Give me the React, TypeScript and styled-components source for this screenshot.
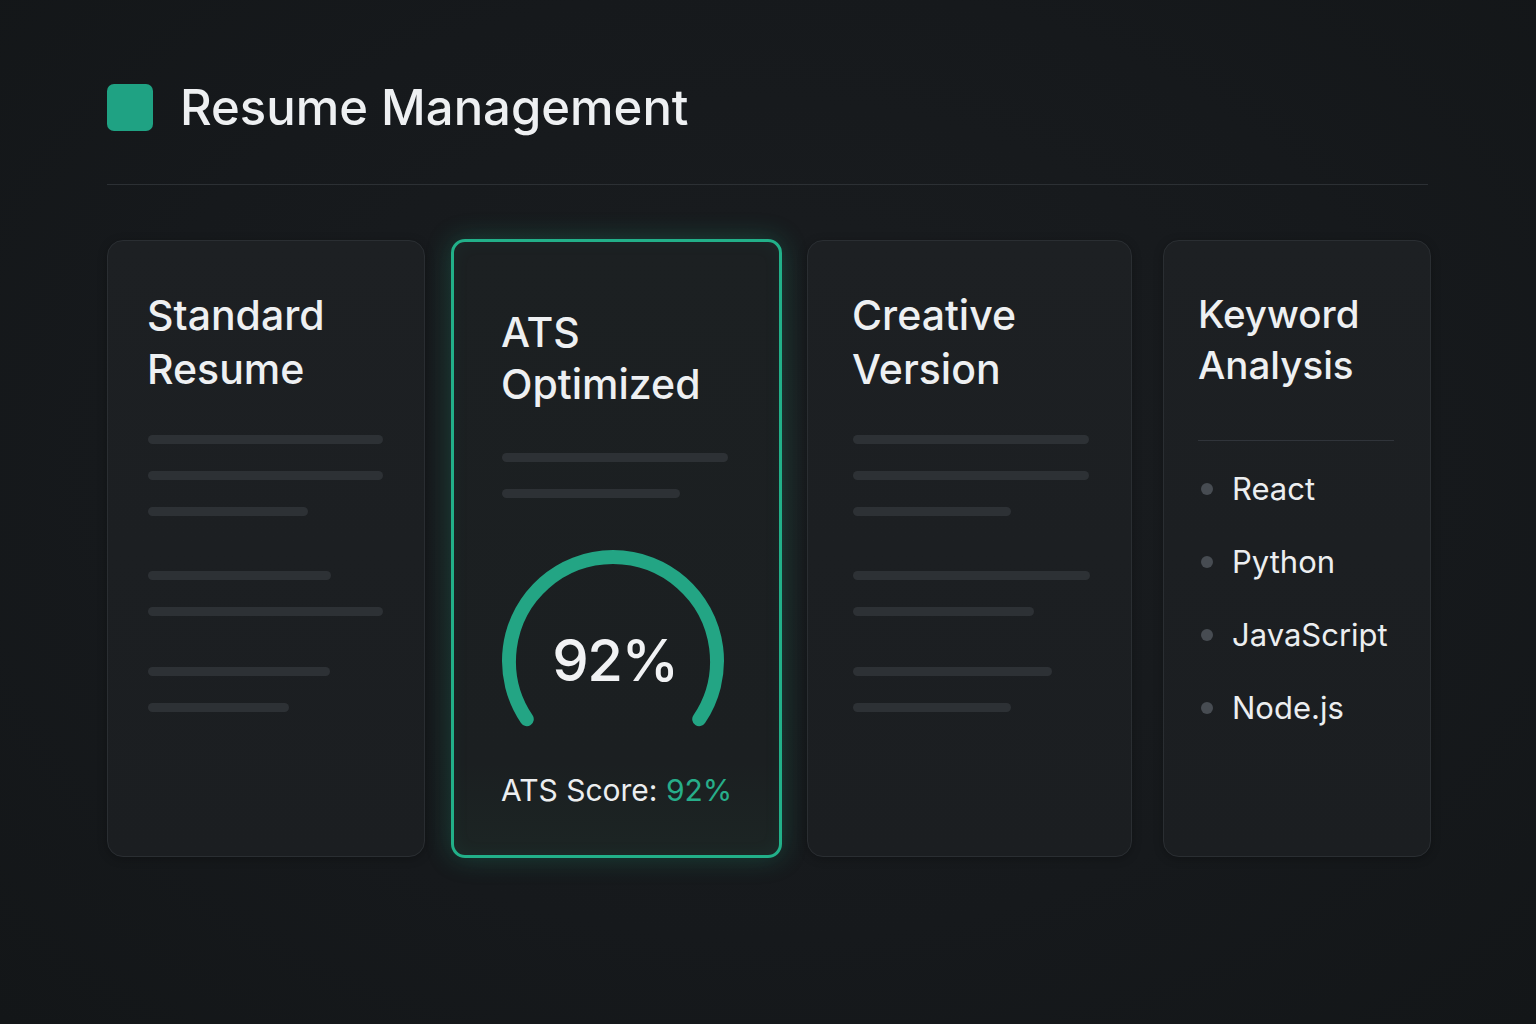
import React from "react";
import styled, { createGlobalStyle } from "styled-components";

const Global = createGlobalStyle`
  html, body { margin: 0; padding: 0; background: #16191c; }
  body { font-family: Inter, "Noto Sans", "Liberation Sans", sans-serif; color: #eceef0; }
  * { box-sizing: border-box; }
`;

const Page = styled.div`
  width: 1536px;
  height: 1024px;
  background: radial-gradient(ellipse at 50% 45%, #1a1d20 0%, #16191c 60%, #131618 100%);
  padding: 84px 105px 0 107px;
`;

const Header = styled.header`
  display: flex;
  align-items: center;
  gap: 27px;
  height: 47px;
`;

const Logo = styled.div`
  width: 46px;
  height: 47px;
  border-radius: 7px;
  background: #1fa283;
`;

const Title = styled.h1`
  margin: 0;
  font-size: 49px;
  font-weight: 500;
  color: #eef0f2;
  line-height: 47px;
`;

const Divider = styled.div`
  height: 1px;
  background: #2c3034;
  margin: 53px 3px 0 0;
`;

const Cards = styled.div`
  display: flex;
  align-items: flex-start;
  margin-top: 55px;
  width: 1324px;
`;

const Card = styled.section<{ $w: number; $ml: number; $pl: number; $pt: number; $active?: boolean }>`
  width: ${(p) => p.$w}px;
  margin-left: ${(p) => p.$ml}px;
  height: ${(p) => (p.$active ? 619 : 617)}px;
  margin-top: ${(p) => (p.$active ? -1 : 0)}px;
  border-radius: ${(p) => (p.$active ? 14 : 16)}px;
  border: ${(p) => (p.$active ? "3px solid #22b089" : "1px solid #2a2e32")};
  background: ${(p) =>
    p.$active
      ? "linear-gradient(180deg, #1c2022 0%, #1b1f21 85%, #1c2524 100%)"
      : "linear-gradient(180deg, #1d2023 0%, #1b1e21 100%)"};
  box-shadow: ${(p) =>
    p.$active
      ? "0 0 26px rgba(34, 176, 137, 0.28), inset 0 0 18px rgba(34, 176, 137, 0.06)"
      : "0 2px 10px rgba(0,0,0,0.25)"};
  padding: ${(p) => p.$pt}px 20px 0 ${(p) => p.$pl}px;
  display: flex;
  flex-direction: column;
  flex: none;
`;

const CardTitle = styled.h2<{ $lh?: number; $fs?: number }>`
  margin: 0;
  font-size: ${(p) => p.$fs ?? 41}px;
  font-weight: 500;
  line-height: ${(p) => p.$lh ?? 54}px;
  color: #eef0f2;
`;

const Bars = styled.div<{ $mt: number }>`
  display: flex;
  flex-direction: column;
  margin-top: ${(p) => p.$mt}px;
`;

const Bar = styled.div<{ $w: number; $gap: number }>`
  width: ${(p) => p.$w}px;
  height: 9px;
  border-radius: 5px;
  background: #2d3135;
  margin-top: ${(p) => p.$gap}px;
  margin-left: 1px;
`;

const GaugeWrap = styled.div`
  margin: 47px 0 0 -4px;
  width: 232px;
  height: 190px;
`;

const GaugeNumber = styled.text`
  font-family: Inter, "Noto Sans", sans-serif;
  font-size: 58px;
  font-weight: 500;
  letter-spacing: -1.5px;
  fill: #f1f2f4;
`;

const Score = styled.div`
  margin-top: 37px;
  font-size: 30px;
  line-height: 36px;
  color: #eceef0;
  font-weight: 400;
`;

const ScoreValue = styled.span`
  color: #27ae8a;
`;

const Rule = styled.div`
  height: 1px;
  width: 196px;
  background: #30343a;
  margin-top: 49px;
`;

const KeywordList = styled.ul`
  list-style: none;
  margin: 30px 0 0 0;
  padding: 0;
  display: flex;
  flex-direction: column;
  gap: 37px;
`;

const Keyword = styled.li`
  display: flex;
  align-items: center;
  gap: 19px;
  font-size: 31px;
  line-height: 36px;
  color: #eceef0;
`;

const Dot = styled.span`
  width: 12px;
  height: 12px;
  border-radius: 50%;
  background: #474c52;
  margin-left: 3px;
  flex: none;
`;

type BarSpec = [number, number];

const standardBars: BarSpec[] = [
  [235, 0], [235, 27], [160, 27], [183, 55], [235, 27], [182, 51], [141, 27],
];
const creativeBars: BarSpec[] = [
  [236, 0], [236, 27], [158, 27], [237, 55], [181, 27], [199, 51], [158, 27],
];

function Gauge() {
  const cx = 116;
  const cy = 116;
  const r = 104;
  const a = (34 * Math.PI) / 180;
  const x1 = cx - r * Math.cos(a);
  const x2 = cx + r * Math.cos(a);
  const y = cy + r * Math.sin(a);
  return (
    <GaugeWrap>
      <svg width="232" height="190" viewBox="0 0 232 190">
        <path
          d={`M ${x1} ${y} A ${r} ${r} 0 1 1 ${x2} ${y}`}
          fill="none"
          stroke="#23a584"
          strokeWidth="14"
          strokeLinecap="round"
        />
        <GaugeNumber x={cx + 2} y={136} textAnchor="middle">
          92%
        </GaugeNumber>
      </svg>
    </GaugeWrap>
  );
}

export default function App() {
  return (
    <>
      <Global />
      <Page>
        <Header>
          <Logo />
          <Title>Resume Management</Title>
        </Header>
        <Divider />
        <Cards>
          <Card $w={318} $ml={0} $pl={39} $pt={47}>
            <CardTitle>
              Standard
              <br />
              Resume
            </CardTitle>
            <Bars $mt={39}>
              {standardBars.map(([w, g], i) => (
                <Bar key={i} $w={w} $gap={g} />
              ))}
            </Bars>
          </Card>
          <Card $w={331} $ml={26} $pl={47} $pt={64} $active>
            <CardTitle $lh={52}>
              ATS
              <br />
              Optimized
            </CardTitle>
            <Bars $mt={43}>
              <Bar $w={226} $gap={0} />
              <Bar $w={178} $gap={27} />
            </Bars>
            <Gauge />
            <Score>
              ATS Score: <ScoreValue>92%</ScoreValue>
            </Score>
          </Card>
          <Card $w={325} $ml={25} $pl={44} $pt={47}>
            <CardTitle>
              Creative
              <br />
              Version
            </CardTitle>
            <Bars $mt={39}>
              {creativeBars.map(([w, g], i) => (
                <Bar key={i} $w={w} $gap={g} />
              ))}
            </Bars>
          </Card>
          <Card $w={268} $ml={31} $pl={34} $pt={48}>
            <CardTitle $lh={51} $fs={38.5}>
              Keyword
              <br />
              Analysis
            </CardTitle>
            <Rule />
            <KeywordList>
              {["React", "Python", "JavaScript", "Node.js"].map((k) => (
                <Keyword key={k}>
                  <Dot />
                  {k}
                </Keyword>
              ))}
            </KeywordList>
          </Card>
        </Cards>
      </Page>
    </>
  );
}
